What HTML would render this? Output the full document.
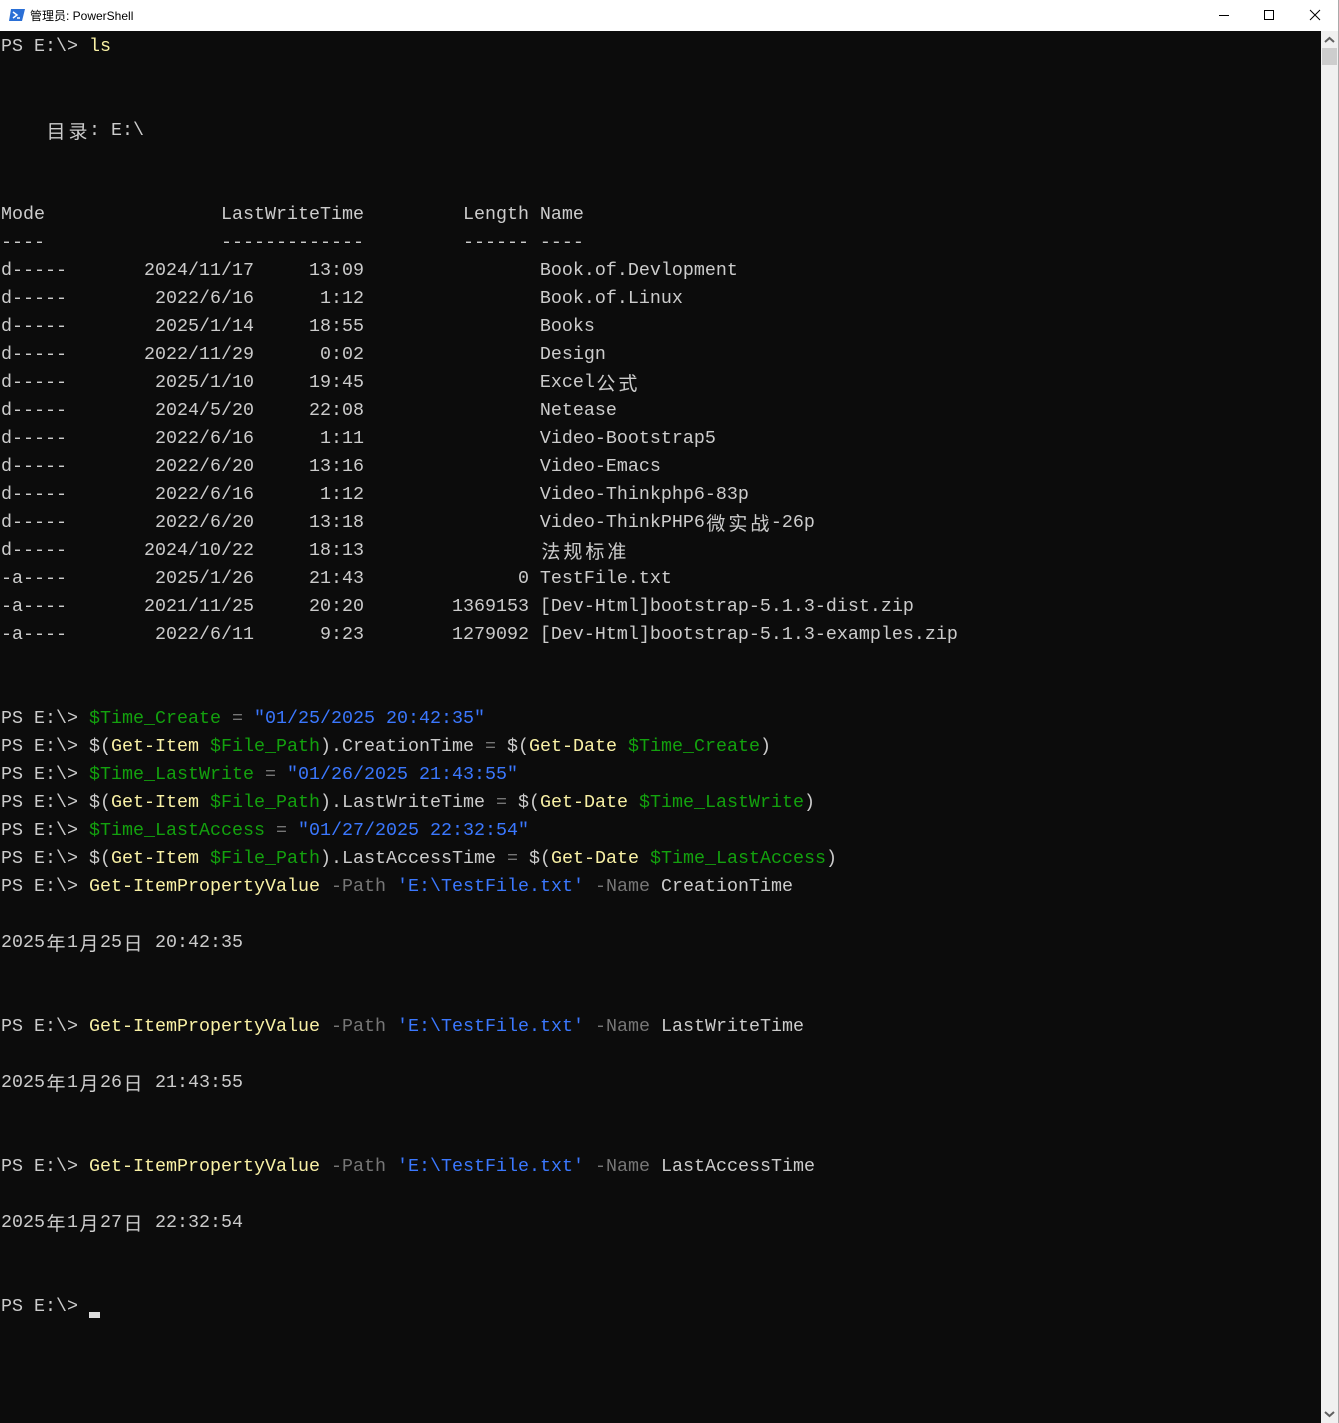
<!DOCTYPE html>
<html><head><meta charset="utf-8"><style>
html,body{margin:0;padding:0;width:1339px;height:1423px;overflow:hidden;background:#0c0c0c;}
.title{position:absolute;left:0;top:0;width:1339px;height:31px;background:#fff;}
.title .t{position:absolute;left:30px;top:7px;font:12px "Liberation Sans","Noto Sans CJK SC",sans-serif;color:#000;}
.term{position:absolute;left:1px;top:33px;width:1320px;height:1388px;}
.l{position:absolute;left:0;height:28px;line-height:28px;white-space:pre;font-family:"Liberation Mono","Noto Sans CJK SC",monospace;font-size:18.33px;color:#cccccc;}
.w{display:inline-block;width:22px;height:28px;line-height:28px;vertical-align:top;text-align:center;font-family:"Noto Sans CJK SC",sans-serif;font-size:19px;}
.g{color:#13a10e}.b{color:#3b78ff}.y{color:#f9f1a5}.k{color:#767676}
.sb{position:absolute;left:1321px;top:31px;width:17px;height:1392px;background:#f0f0f0;}
.edge{position:absolute;left:1338px;top:0;width:1px;height:1423px;background:#aaa;}
</style></head><body>
<div class="title">
<svg style="position:absolute;left:9px;top:8px" width="16" height="14" viewBox="0 0 16 14"><path d="M2 1H16L13 13H0Z" fill="#2a6fd6"/><path d="M4 4L8 7L4 10" stroke="#fff" stroke-width="1.5" fill="none"/><path d="M8 10H11" stroke="#fff" stroke-width="1.5"/></svg>
<div class="t">管理员: PowerShell</div>
<svg style="position:absolute;left:1218px;top:9px" width="12" height="12"><path d="M1 6.5H11" stroke="#000"/></svg>
<svg style="position:absolute;left:1263px;top:9px" width="12" height="12"><rect x="1.5" y="1.5" width="9" height="9" fill="none" stroke="#000"/></svg>
<svg style="position:absolute;left:1309px;top:9px" width="12" height="12"><path d="M1 1L11 11M11 1L1 11" stroke="#000"/></svg>
</div>
<div class="term">
<div class="l" style="top:0">PS E:\&gt; <span class="y">ls</span></div>
<div class="l" style="top:84px">    <span class="w">目</span><span class="w">录</span>: E:\</div>
<div class="l" style="top:168px">Mode                LastWriteTime         Length Name</div>
<div class="l" style="top:196px">----                -------------         ------ ----</div>
<div class="l" style="top:224px">d-----       2024/11/17     13:09                Book.of.Devlopment</div>
<div class="l" style="top:252px">d-----        2022/6/16      1:12                Book.of.Linux</div>
<div class="l" style="top:280px">d-----        2025/1/14     18:55                Books</div>
<div class="l" style="top:308px">d-----       2022/11/29      0:02                Design</div>
<div class="l" style="top:336px">d-----        2025/1/10     19:45                Excel<span class="w">公</span><span class="w">式</span></div>
<div class="l" style="top:364px">d-----        2024/5/20     22:08                Netease</div>
<div class="l" style="top:392px">d-----        2022/6/16      1:11                Video-Bootstrap5</div>
<div class="l" style="top:420px">d-----        2022/6/20     13:16                Video-Emacs</div>
<div class="l" style="top:448px">d-----        2022/6/16      1:12                Video-Thinkphp6-83p</div>
<div class="l" style="top:476px">d-----        2022/6/20     13:18                Video-ThinkPHP6<span class="w">微</span><span class="w">实</span><span class="w">战</span>-26p</div>
<div class="l" style="top:504px">d-----       2024/10/22     18:13                <span class="w">法</span><span class="w">规</span><span class="w">标</span><span class="w">准</span></div>
<div class="l" style="top:532px">-a----        2025/1/26     21:43              0 TestFile.txt</div>
<div class="l" style="top:560px">-a----       2021/11/25     20:20        1369153 [Dev-Html]bootstrap-5.1.3-dist.zip</div>
<div class="l" style="top:588px">-a----        2022/6/11      9:23        1279092 [Dev-Html]bootstrap-5.1.3-examples.zip</div>
<div class="l" style="top:672px">PS E:\&gt; <span class="g">$Time_Create</span> <span class="k">=</span> <span class="b">"01/25/2025 20:42:35"</span></div>
<div class="l" style="top:700px">PS E:\&gt; $(<span class="y">Get-Item</span> <span class="g">$File_Path</span>).CreationTime <span class="k">=</span> $(<span class="y">Get-Date</span> <span class="g">$Time_Create</span>)</div>
<div class="l" style="top:728px">PS E:\&gt; <span class="g">$Time_LastWrite</span> <span class="k">=</span> <span class="b">"01/26/2025 21:43:55"</span></div>
<div class="l" style="top:756px">PS E:\&gt; $(<span class="y">Get-Item</span> <span class="g">$File_Path</span>).LastWriteTime <span class="k">=</span> $(<span class="y">Get-Date</span> <span class="g">$Time_LastWrite</span>)</div>
<div class="l" style="top:784px">PS E:\&gt; <span class="g">$Time_LastAccess</span> <span class="k">=</span> <span class="b">"01/27/2025 22:32:54"</span></div>
<div class="l" style="top:812px">PS E:\&gt; $(<span class="y">Get-Item</span> <span class="g">$File_Path</span>).LastAccessTime <span class="k">=</span> $(<span class="y">Get-Date</span> <span class="g">$Time_LastAccess</span>)</div>
<div class="l" style="top:840px">PS E:\&gt; <span class="y">Get-ItemPropertyValue</span> <span class="k">-Path</span> <span class="b">'E:\TestFile.txt'</span> <span class="k">-Name</span> CreationTime</div>
<div class="l" style="top:896px">2025<span class="w">年</span>1<span class="w">月</span>25<span class="w">日</span> 20:42:35</div>
<div class="l" style="top:980px">PS E:\&gt; <span class="y">Get-ItemPropertyValue</span> <span class="k">-Path</span> <span class="b">'E:\TestFile.txt'</span> <span class="k">-Name</span> LastWriteTime</div>
<div class="l" style="top:1036px">2025<span class="w">年</span>1<span class="w">月</span>26<span class="w">日</span> 21:43:55</div>
<div class="l" style="top:1120px">PS E:\&gt; <span class="y">Get-ItemPropertyValue</span> <span class="k">-Path</span> <span class="b">'E:\TestFile.txt'</span> <span class="k">-Name</span> LastAccessTime</div>
<div class="l" style="top:1176px">2025<span class="w">年</span>1<span class="w">月</span>27<span class="w">日</span> 22:32:54</div>
<div class="l" style="top:1260px">PS E:\&gt; </div>
<div style="position:absolute;left:88px;top:1279px;width:11px;height:6px;background:#ddd"></div>
</div>
<div class="sb">
<svg style="position:absolute;left:3px;top:5px" width="11" height="8"><path d="M1 6L5.5 2L10 6" stroke="#606060" stroke-width="2" fill="none"/></svg>
<div style="position:absolute;left:1px;top:17px;width:15px;height:17px;background:#cdcdcd"></div>
<svg style="position:absolute;left:3px;top:1379px" width="11" height="8"><path d="M1 2L5.5 6L10 2" stroke="#606060" stroke-width="2" fill="none"/></svg>
</div>
<div class="edge"></div>
</body></html>
